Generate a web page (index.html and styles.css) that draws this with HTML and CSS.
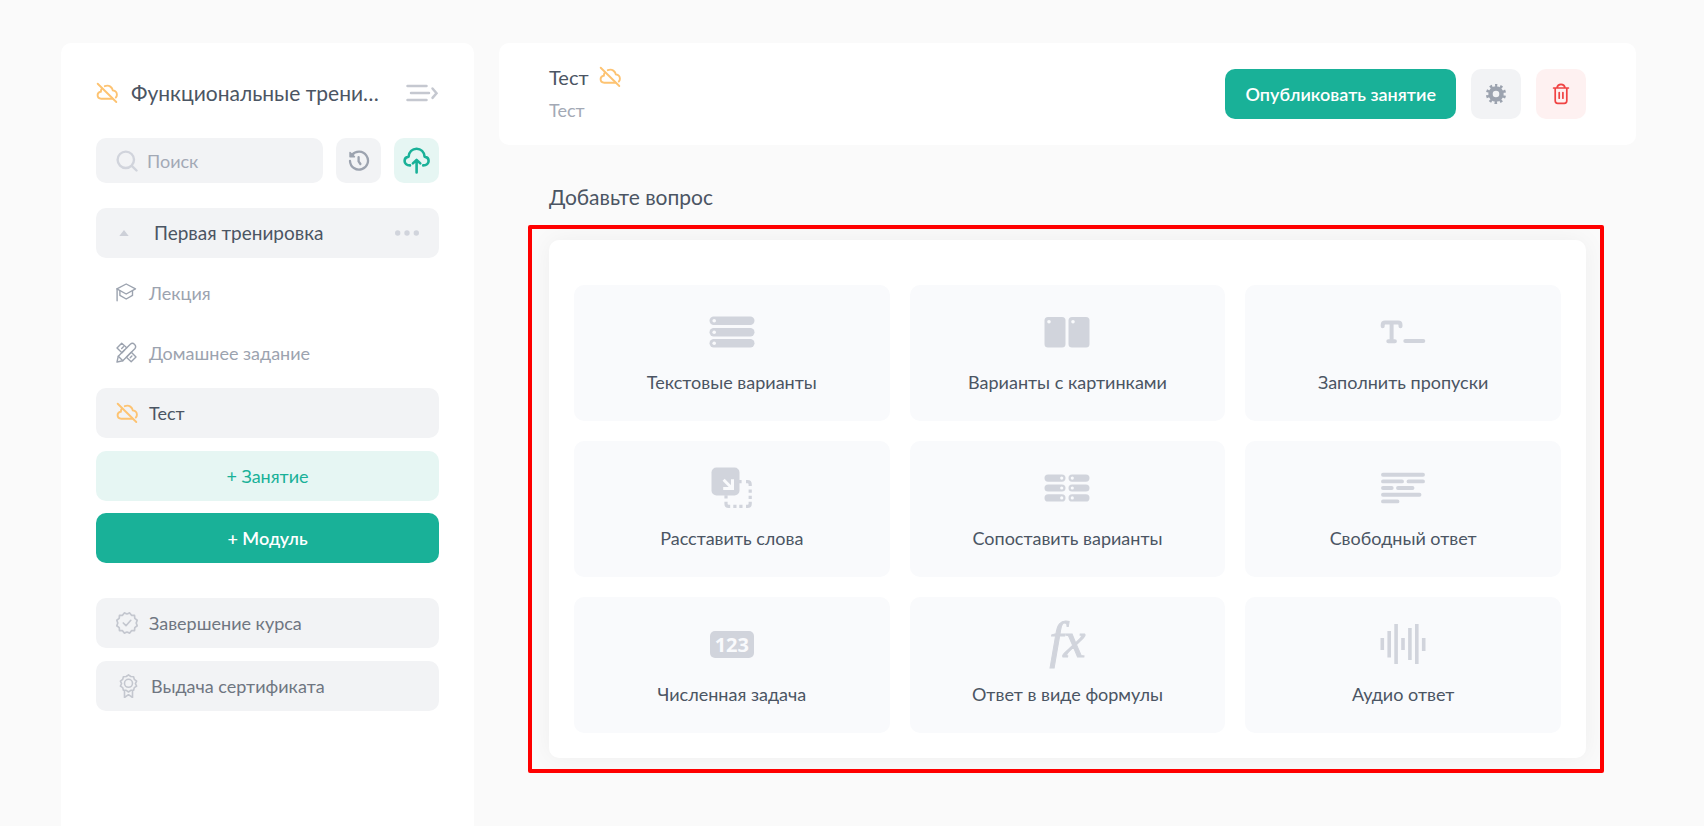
FILE: index.html
```html
<!DOCTYPE html>
<html lang="ru">
<head>
<meta charset="utf-8">
<meta name="viewport" content="width=device-width, initial-scale=1">
<title>Редактор теста</title>
<link rel="stylesheet" href="styles.css">
</head>
<body>
<svg class="sprite" aria-hidden="true">
  <symbol id="cloud-off" viewBox="0 0 22 22">
    <g fill="none" stroke="currentColor" stroke-width="1.9" stroke-linecap="round">
      <path d="M1.7 1.7 20.3 20"/>
      <path d="M5.9 6.4C5.1 7.4 4.9 8.4 4.9 9.6 2.9 10 1.6 11.4 1.6 13.1c0 2.1 1.6 3.6 3.7 3.6h10.9"/>
      <path d="M8.8 4.2c1.8-.8 4-.7 5.6.4 1.4 1 2.2 2.4 2.4 3.8 2.5.4 4.1 2.1 4.1 4.3 0 1.1-.4 2.1-1.1 2.8"/>
    </g>
  </symbol>
</svg>
<div class="layout">
  <aside class="sidebar">
    <div class="course">
      <svg class="icon-cloud"><use href="#cloud-off"/></svg>
      <h1 class="course-title">Функциональные трени…</h1>
      <button class="plain" type="button" aria-label="Свернуть меню">
        <svg width="33" height="20" viewBox="0 0 33 20" fill="none" stroke="#c5c8d0" stroke-width="2.5" stroke-linecap="round"><path d="M1.5 3h19M5 10h18M1.500 17h19M26.500 5.500l4 4.700-4 4.700"/></svg>
      </button>
    </div>
    <div class="tools">
      <label class="search">
        <svg width="22" height="22" viewBox="0 0 22 22" fill="none" stroke="#d1d4dc" stroke-width="2.4" stroke-linecap="round"><circle cx="9.8" cy="9.8" r="8.2"/><path d="m15.8 15.8 4.7 4.7"/></svg>
        <input type="search" placeholder="Поиск" aria-label="Поиск">
      </label>
      <button class="tool" type="button" aria-label="История">
        <svg width="22" height="22" viewBox="0 0 22 22" fill="none" stroke="#9ca3af" stroke-width="2.3" stroke-linecap="round" stroke-linejoin="round"><path d="M4 5a9 9 0 1 1-2 6"/><path d="M2 2.4v4.4h4.5z" fill="#9ca3af" stroke-width="1.4"/><path d="M10.6 7.2v4.2l1.8 2.600"/></svg>
      </button>
      <button class="tool tool-green" type="button" aria-label="Загрузить">
        <svg width="28" height="28" viewBox="0 0 28 28" fill="none" stroke="#19b198" stroke-width="2.600" stroke-linecap="round" stroke-linejoin="round"><path d="M7 18.400C3.500 18.400 1.600 16.400 1.600 14c0-2.300 1.600-4 4-4.400C6.100 5 9.300 1.800 13.600 1.800s7.500 3.200 8 7.800c2.400.4 4 2.100 4 4.400 0 2.400-1.900 4.400-5.400 4.400"/><path d="M13.600 25.400V14.400M9.900 16.400l3.700-3.500 3.700 3.500"/></svg>
      </button>
    </div>
    <nav class="lessons" aria-label="Занятия">
      <button class="row row-filled" type="button">
        <svg class="icon-caret" viewBox="0 0 10 6"><path d="M5 0 9.700 6H.3z" fill="#cdd0d8"/></svg>
        <span class="module-name">Первая тренировка</span>
        <svg width="24" height="6" viewBox="0 0 24 6" fill="#d1d4dc"><circle cx="2.700" cy="3" r="2.700"/><circle cx="12" cy="3" r="2.700"/><circle cx="21.300" cy="3" r="2.700"/></svg>
      </button>
      <a class="row muted" href="#">
        <svg class="row-icon" viewBox="0 0 22 22" fill="none" stroke="#9ca3af" stroke-width="1.400" stroke-linejoin="round" stroke-linecap="round"><path d="m10.200 2 9.300 4.800-9.300 5.200-9.300-5.200z"/><path d="M1.100 6.800v12M3.900 8.800v4.600l6.300 3.600 6.300-3.600V8.800"/></svg>
        Лекция
      </a>
      <a class="row muted" href="#">
        <svg class="row-icon" viewBox="0 0 22 22" fill="none" stroke="#9ca3af" stroke-width="1.400" stroke-linejoin="round" stroke-linecap="round"><path d="M1 20 2.300 14.200 14.300 2.200a3.200 3.200 0 0 1 4.500 4.500L6.800 18.700z"/><path d="m2.300 14.200 4.500 4.500M8.500 8 6 10.700 1 5.900 5.700 1.200l5 4.600M5.700 6.500l1.700-1.700M13 12.500l2.300-2.200 4.700 4.800-4.800 4.700-4.800-4.600L12 13.600M14.200 15.800l1.700-1.700"/></svg>
        Домашнее задание
      </a>
      <a class="row row-filled" href="#" aria-current="page">
        <svg class="icon-cloud"><use href="#cloud-off"/></svg>
        Тест
      </a>
    </nav>
    <div class="adders">
      <button class="row btn-soft" type="button">+ Занятие</button>
      <button class="row btn-solid" type="button">+ Модуль</button>
    </div>
    <div class="extras">
      <a class="row row-filled soft-text" href="#">
        <svg class="row-icon" viewBox="0 0 22 22" fill="none" stroke="#c4c7cf" stroke-width="1.700" stroke-linejoin="round" stroke-linecap="round"><path d="M11 2 13.700.9l1.800 2.400 3 .1.300 3 2.400 1.800-1 2.800 1 2.800-2.400 1.800-.3 3-3 .1-1.800 2.400L11 20l-2.700 1.100-1.800-2.400-3-.1-.3-3L.8 13.800l1-2.800-1-2.800 2.400-1.800.3-3 3-.1L8.300.900z"/><path d="m7.300 11 2.700 2.700 4.800-5.400"/></svg>
        Завершение курса
      </a>
      <a class="row row-filled soft-text" href="#">
        <svg class="icon-award" viewBox="0 0 24 24" fill="none" stroke="#c4c7cf" stroke-width="1.600" stroke-linejoin="round"><path d="M12.500.8 14.800 2.500l2.800.2.700 2.700 2.300 1.700-1.200 2.500 1.200 2.500-2.300 1.500-.7 2.600-2.800.1-2.300 1.700-2.300-1.700-2.800-.1-.7-2.600-2.300-1.500 1.200-2.500-1.200-2.500L6.700 5.400l.7-2.700 2.800-.2z"/><circle cx="12.500" cy="9.300" r="4"/><path d="M8.500 16.500v7l4-2.800 4 2.800v-7"/></svg>
        Выдача сертификата
      </a>
    </div>
  </aside>
  <main class="content">
    <header class="header">
      <div class="heading">
        <div class="heading-title">Тест <svg class="icon-cloud"><use href="#cloud-off"/></svg></div>
        <div class="heading-sub">Тест</div>
      </div>
      <div class="actions">
        <button class="publish" type="button">Опубликовать занятие</button>
        <button class="square square-gray" type="button" aria-label="Настройки">
          <svg width="22" height="22" viewBox="0 0 22 22" fill="none" stroke="#9ca3af"><circle cx="11" cy="11" r="5.500" stroke-width="4.400"/><circle cx="11" cy="11" r="8.500" stroke-width="3.200" stroke-dasharray="2.500 2.840" stroke-dashoffset="1.250" transform="rotate(-90 11 11)"/></svg>
        </button>
        <button class="square square-red" type="button" aria-label="Удалить">
          <svg width="18" height="22" viewBox="0 0 18 22" fill="none" stroke="#f04343" stroke-width="1.700" stroke-linecap="round"><path d="M1.600 5h14.800M3.200 5v12.800c0 1.600 1 2.500 2.500 2.500h6.600c1.500 0 2.500-.9 2.500-2.500V5M5 4.600c.4-2 1.500-3.200 4-3.200s3.600 1.200 4 3.200M7.200 9.500v5.700M10.900 9.500v5.700"/></svg>
        </button>
      </div>
    </header>
    <section class="questions">
      <h2 class="questions-title">Добавьте вопрос</h2>
      <div class="panel">
        <button class="card" type="button">
          <span class="art"><svg width="46" height="32" viewBox="0 0 46 32"><g fill="#d1d4dc"><rect x=".5" y=".500" width="45" height="8.500" rx="4.200"/><rect x=".5" y="12" width="45" height="8.500" rx="4.200"/><rect x=".5" y="23" width="45" height="8.500" rx="4.200"/></g><g fill="#f9fafc"><circle cx="5.200" cy="4.700" r="1.800"/><circle cx="5.200" cy="16.200" r="1.800"/><circle cx="5.200" cy="27.200" r="1.800"/></g></svg></span>
          Текстовые варианты
        </button>
        <button class="card" type="button">
          <span class="art"><svg width="46" height="32" viewBox="0 0 46 32"><g fill="#d1d4dc"><rect x=".5" y="1" width="21" height="30.500" rx="3.500"/><rect x="24.500" y="1" width="21" height="30.500" rx="3.500"/></g><g fill="#f9fafc"><circle cx="5" cy="5.700" r="1.800"/><circle cx="29" cy="5.700" r="1.800"/></g></svg></span>
          Варианты с картинками
        </button>
        <button class="card" type="button">
          <span class="art"><svg width="46" height="24" viewBox="0 0 46 24" fill="none" stroke="#d1d4dc" stroke-width="4" stroke-linecap="round"><path d="M2.700 6.200V5c0-1.500.9-2.400 2.400-2.400h13c1.500 0 2.400.9 2.400 2.400v1.200M11.600 3v18M8.300 21.300h6.600M25.300 20.900h18" /></svg></span>
          Заполнить пропуски
        </button>
        <button class="card" type="button">
          <span class="art"><svg width="42" height="42" viewBox="0 0 42 42"><g fill="none" stroke="#d1d4dc" stroke-width="3.200"><path d="M28 14.700h2.600M35 14.700h1.500c1.600 0 2.700 1 2.700 2.700v1.500M39.200 22.500v3.200M39.200 28.700v3.200M39.200 34.700v2c0 1.600-1 2.700-2.700 2.700H35M31.500 39.400h-3.200M25.500 39.400h-3.200M19.200 39.400h-1.500c-1.700 0-2.700-1.100-2.700-2.700v-2M15 31.500v-3.200"/></g><rect x=".5" y=".500" width="28" height="28" rx="5" fill="#d1d4dc"/><path d="M12.600 12.800 21 21.200M21.500 12.300v9.300h-9.300" fill="none" stroke="#f9fafc" stroke-width="3"/></svg></span>
          Расставить слова
        </button>
        <button class="card" type="button">
          <span class="art"><svg width="46" height="28" viewBox="0 0 46 28"><g fill="#d1d4dc"><rect x=".5" y=".500" width="21" height="7.200" rx="3.600"/><rect x="24.500" y=".500" width="21" height="7.200" rx="3.600"/><rect x=".5" y="10.400" width="21" height="7.200" rx="3.600"/><rect x="24.500" y="10.400" width="21" height="7.200" rx="3.600"/><rect x=".5" y="20.300" width="21" height="7.200" rx="3.600"/><rect x="24.500" y="20.300" width="21" height="7.200" rx="3.600"/></g><g fill="#f9fafc"><circle cx="17.700" cy="4.100" r="1.600"/><circle cx="28.300" cy="4.100" r="1.600"/><circle cx="17.700" cy="14" r="1.600"/><circle cx="28.300" cy="14" r="1.600"/><circle cx="17.700" cy="23.900" r="1.600"/><circle cx="28.300" cy="23.900" r="1.600"/></g></svg></span>
          Сопоставить варианты
        </button>
        <button class="card" type="button">
          <span class="art"><svg width="46" height="32" viewBox="0 0 46 32" fill="none" stroke="#d1d4dc" stroke-width="3.900" stroke-linecap="round"><path d="M3 2.700h40M3 9.400h19M28.500 9.400H43M3 16h8.700M18 16h14.500M3 22.700h36.500M3 29.400h14.500"/></svg></span>
          Свободный ответ
        </button>
        <button class="card" type="button">
          <span class="art"><span class="digits">123</span></span>
          Численная задача
        </button>
        <button class="card" type="button">
          <span class="art formula">fx</span>
          Ответ в виде формулы
        </button>
        <button class="card" type="button">
          <span class="art"><svg width="46" height="42" viewBox="0 0 46 42" fill="none" stroke="#d1d4dc" stroke-width="3.600"><path d="M2.300 15v12M9.200 8v26.500M16.100 1v40M23 15v12M29.900 5v32M36.800 1v40M43.700 15v13"/></svg></span>
          Аудио ответ
        </button>
        <div class="highlight"></div>
      </div>
    </section>
  </main>
</div>
</body>
</html>
```
FILE: styles.css
```css
* {
  box-sizing: border-box;
}

body {
  margin: 0;
  background: #fafafa;
  color: #4b5563;
  font: 18px/26px Lato, "Open Sans", sans-serif;
}

button,
input {
  font: inherit;
  color: inherit;
  border: 0;
  padding: 0;
  background: none;
}

button {
  cursor: pointer;
}

a {
  color: inherit;
  text-decoration: none;
}

svg {
  display: block;
  flex: none;
}

h1,
h2 {
  margin: 0;
  font-size: 21px;
  line-height: 28px;
  font-weight: 400;
}

.sprite {
  position: absolute;
  width: 0;
  height: 0;
}

.layout {
  display: flex;
  gap: 25px;
  min-height: 100vh;
  padding: 43px 68px 0 61px;
}

.sidebar {
  flex: none;
  width: 413px;
  padding: 36px 35px;
  background: #fff;
  border-radius: 10px 10px 0 0;
}

.icon-cloud {
  width: 22px;
  height: 22px;
  color: #fdc372;
}

.course {
  display: flex;
  align-items: center;
  gap: 13px;
  margin-bottom: 31px;
}

.course-title {
  flex: 1;
  min-width: 0;
  white-space: nowrap;
}

.tools {
  display: flex;
  gap: 13px;
  margin-bottom: 25px;
}

.search {
  display: flex;
  flex: 1;
  align-items: center;
  gap: 9px;
  min-width: 0;
  height: 45px;
  padding: 0 20px;
  background: #f2f3f5;
  border-radius: 10px;
}

.search input {
  width: 100%;
  min-width: 0;
  outline: 0;
}

.search input::placeholder {
  color: #a3a9b5;
  opacity: 1;
}

.tool {
  display: grid;
  place-items: center;
  width: 45px;
  height: 45px;
  background: #f2f3f5;
  border-radius: 10px;
}

.tool-green {
  background: #e6f6f3;
}

.lessons {
  display: grid;
  gap: 10px;
}

.adders {
  display: grid;
  gap: 12px;
  margin: 13px 0 35px;
}

.extras {
  display: grid;
  gap: 13px;
}

.row {
  display: flex;
  align-items: center;
  gap: 11px;
  width: 100%;
  height: 50px;
  padding: 0 20px;
  border-radius: 10px;
  text-align: left;
}

.row-filled {
  background: #f2f3f5;
}

.icon-caret {
  width: 10px;
  height: 6px;
  margin: 0 14px 0 3px;
}

.row-icon {
  width: 22px;
  height: 22px;
}

.icon-award {
  width: 24px;
  height: 24px;
}

.module-name {
  flex: 1;
  font-size: 19px;
}

.muted {
  color: #9ca3af;
}

.soft-text {
  color: #6f7681;
}

.btn-soft,
.btn-solid {
  justify-content: center;
}

.btn-soft {
  background: #e6f6f3;
  color: #19b198;
}

.btn-solid {
  background: #19b198;
  color: #fff;
  font-weight: 600;
}

.content {
  flex: 1;
  min-width: 0;
}

.header {
  display: flex;
  align-items: center;
  justify-content: space-between;
  padding: 22px 50px;
  background: #fff;
  border-radius: 10px;
}

.heading {
  display: grid;
  gap: 9px;
  padding-bottom: 1px;
}

.heading-title {
  display: flex;
  align-items: center;
  gap: 10px;
  font-size: 20px;
  line-height: 24px;
}

.heading-sub {
  color: #a3a9b5;
  line-height: 24px;
}

.actions {
  display: flex;
  gap: 15px;
}

.publish {
  height: 50px;
  padding: 0 20px;
  background: #19b198;
  border-radius: 10px;
  color: #fff;
  font-weight: 600;
}

.square {
  display: grid;
  place-items: center;
  width: 50px;
  height: 50px;
  border-radius: 10px;
}

.square-gray {
  background: #f2f3f5;
}

.square-red {
  background: #fef1f1;
}

.questions {
  padding: 38px 50px 68px;
}

.questions-title {
  margin-bottom: 29px;
}

.panel {
  position: relative;
  display: grid;
  grid-template-columns: repeat(3, minmax(0, 1fr));
  gap: 20px;
  padding: 45px 25px 25px;
  background: #fff;
  border-radius: 10px;
  box-shadow: 0 0 25px rgba(0, 0, 0, 0.05);
}

.highlight {
  position: absolute;
  inset: -15px -18px -15px -21px;
  border: 4px solid #f00;
  border-radius: 2px;
  pointer-events: none;
}

.card {
  padding: 24px 10px 26px;
  background: #f9fafc;
  border-radius: 10px;
}

.art {
  display: grid;
  place-items: center;
  height: 46px;
  margin-bottom: 14px;
}

.digits {
  padding: 0 5px;
  background: #d1d4dc;
  border-radius: 5px;
  color: #f9fafc;
  font: 700 20px/27px "Open Sans", sans-serif;
}

.formula {
  padding-bottom: 8px;
  color: #d1d4dc;
  font: italic 50px/38px "Liberation Serif", serif;
  -webkit-text-stroke: 1px #d1d4dc;
}
```
